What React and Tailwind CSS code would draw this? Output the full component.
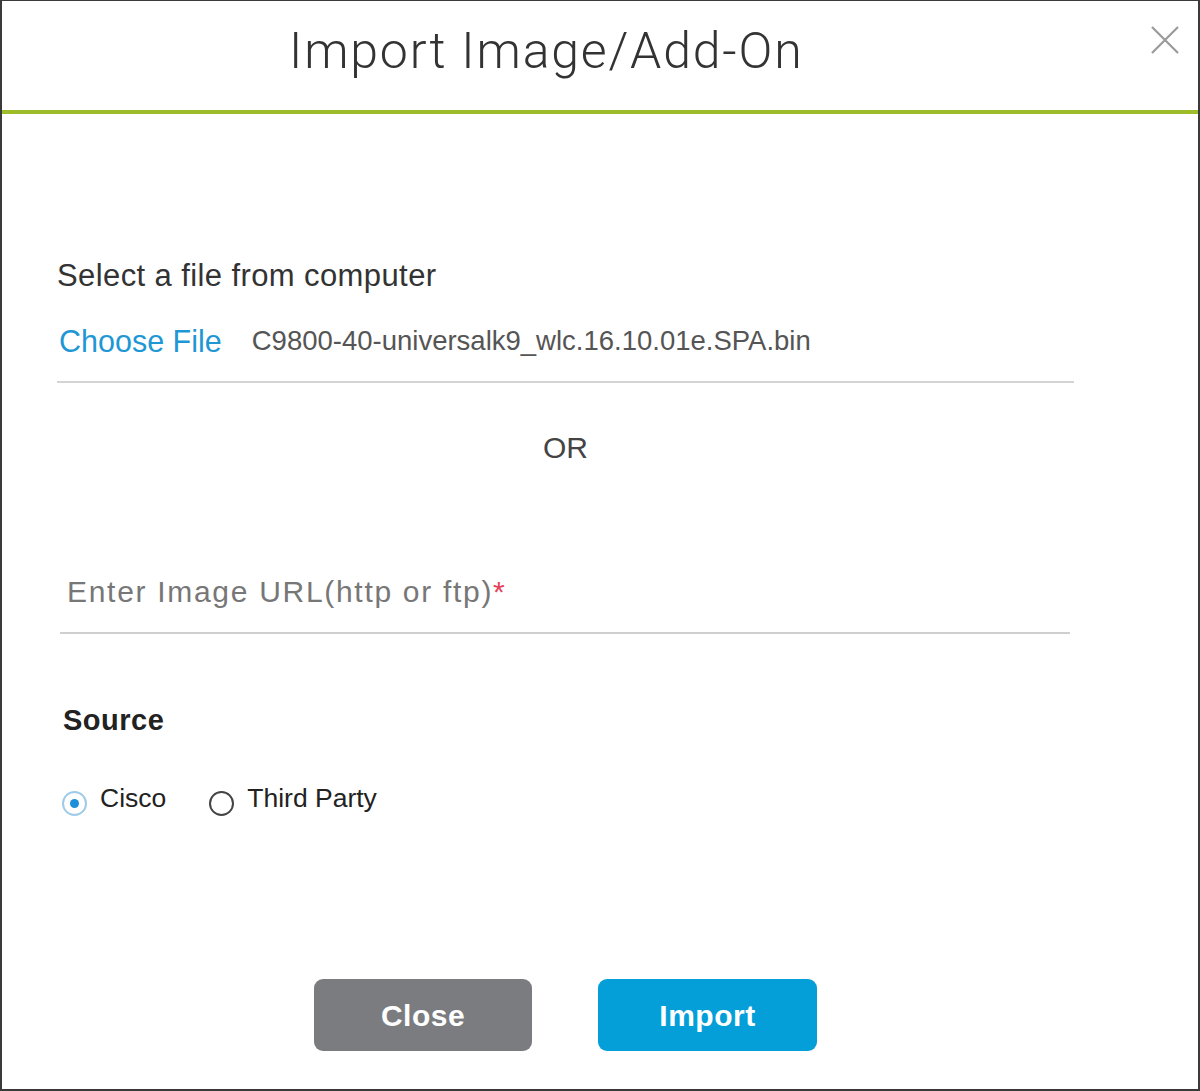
import React, { useState } from "react";

const Radio = ({ checked, label, onClick }) => (
  <button type="button" onClick={onClick} className="flex items-center">
    <span
      className={`mt-[10px] flex h-[25px] w-[25px] items-center justify-center rounded-full border-2 ${
        checked ? "border-[#9fcbe8]" : "border-[#444]"
      }`}
    >
      {checked && <span className="h-[9px] w-[9px] rounded-full bg-[#1b8fd8]" />}
    </span>
    <span className="ml-[13px] text-[26.5px] leading-[36px] text-[#222]">{label}</span>
  </button>
);

const App = () => {
  const [source, setSource] = useState("cisco");
  const [url, setUrl] = useState("");

  return (
    <div
      className="h-[1091px] w-[1200px] border-x-2 border-t border-b-2 border-[#3a3a3a] bg-white"
      style={{ fontFamily: '"Liberation Sans", Arial, sans-serif' }}
    >
      {/* Header */}
      <div className="relative flex h-[113px] items-start border-b-4 border-[#9dbd2b]">
        <h1
          className="ml-[287px] mt-[22px] text-[50px] font-light leading-[56px] tracking-[1.8px] text-[#333]"
          style={{ fontFamily: "Roboto, 'Liberation Sans', sans-serif" }}
        >
          Import Image/Add-On
        </h1>
        <button type="button" className="ml-auto mr-[18px] mt-[24px] text-[#9a9a9a]">
          <svg width="30" height="30" viewBox="0 0 30 30" fill="none" stroke="currentColor" strokeWidth="2.2">
            <path d="M2 2 L28 28 M28 2 L2 28" />
          </svg>
        </button>
      </div>

      {/* Body */}
      <div className="ml-[55px] w-[1017px]">
        <p className="mt-[146px] text-[31px] leading-[32px] tracking-[0.4px] text-[#333]">Select a file from computer</p>

        <div className="mt-[31px] flex items-center border-b-2 border-[#d4d4d4] pb-[22px]">
          <span className="ml-[2px] text-[30.5px] leading-[36px] text-[#1f97d4]">Choose File</span>
          <span className="ml-[30px] text-[27.5px] leading-[36px] text-[#555]">
            C9800-40-universalk9_wlc.16.10.01e.SPA.bin
          </span>
        </div>

        <p className="mt-[47px] text-center text-[30px] leading-[36px] text-[#444]">OR</p>

        <div className="relative ml-[3px] mt-[108px] w-[1010px] border-b-2 border-[#cfcfcf] pb-[22px]">
          <input
            type="text"
            value={url}
            onChange={(e) => setUrl(e.target.value)}
            className="w-full px-[7px] text-[30px] leading-[36px] text-[#333] outline-none"
          />
          {!url && (
            <span className="pointer-events-none absolute left-[7px] top-0 text-[30px] leading-[36px] tracking-[1.7px] text-[#777]">
              Enter Image URL(http or ftp)<span className="text-[#e3435a]">*</span>
            </span>
          )}
        </div>

        <p className="ml-[6px] mt-[68px] text-[29px] font-bold leading-[36px] tracking-[0.5px] text-[#222]">Source</p>

        <div className="ml-[5px] mt-[42px] flex items-center gap-[43px]">
          <Radio checked={source === "cisco"} label="Cisco" onClick={() => setSource("cisco")} />
          <Radio checked={source === "third"} label="Third Party" onClick={() => setSource("third")} />
        </div>

        <div className="mt-[163px] flex justify-center gap-[66px]">
          <button
            type="button"
            className="h-[72px] w-[218px] rounded-[9px] bg-[#7b7c80] text-[30px] font-bold tracking-[0.5px] text-white"
          >
            Close
          </button>
          <button
            type="button"
            className="h-[72px] w-[219px] rounded-[9px] bg-[#049fd9] text-[30px] font-bold tracking-[0.5px] text-white"
          >
            Import
          </button>
        </div>
      </div>
    </div>
  );
};

export default App;
